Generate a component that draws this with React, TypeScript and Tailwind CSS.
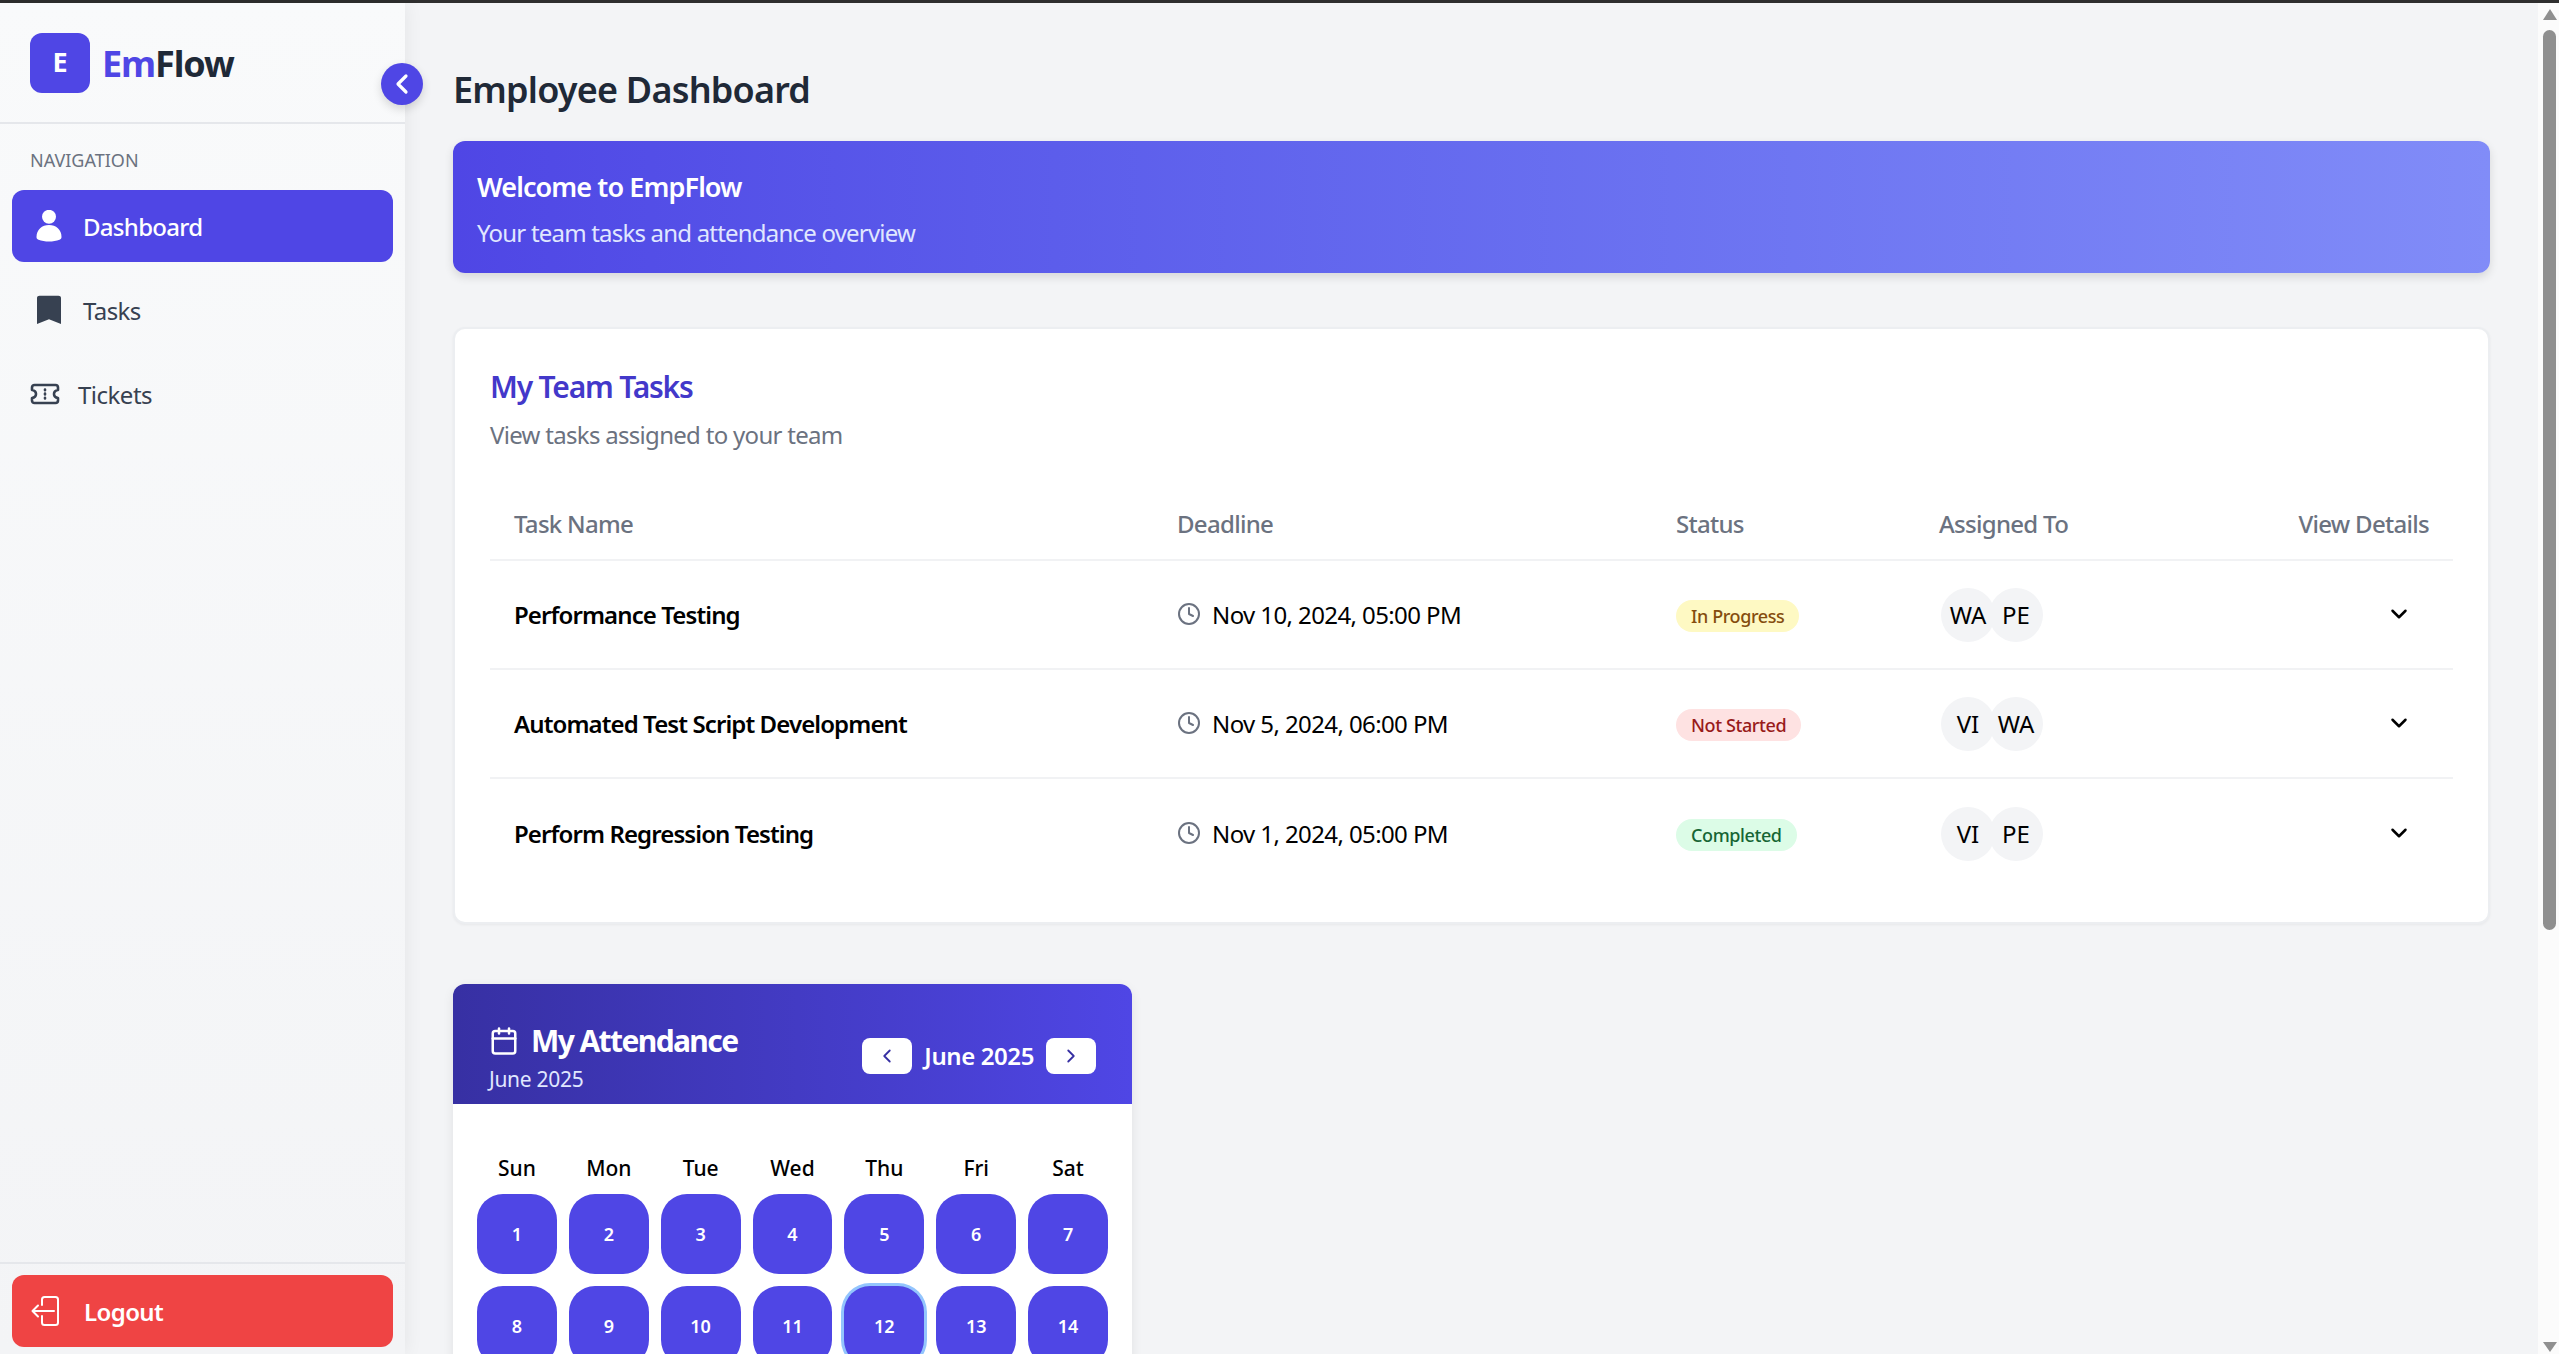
import React from 'react';
import { ChevronLeft, ChevronRight, ChevronDown, Calendar, Clock } from 'lucide-react';

const tasks = [
  { name: 'Performance Testing', deadline: 'Nov 10, 2024, 05:00 PM', status: 'In Progress', badge: 'bg-[#fef9c3] text-[#854d0e]', people: ['WA', 'PE'] },
  { name: 'Automated Test Script Development', deadline: 'Nov 5, 2024, 06:00 PM', status: 'Not Started', badge: 'bg-[#fee2e2] text-[#991b1b]', people: ['VI', 'WA'] },
  { name: 'Perform Regression Testing', deadline: 'Nov 1, 2024, 05:00 PM', status: 'Completed', badge: 'bg-[#dcfce7] text-[#166534]', people: ['VI', 'PE'] },
];

const weekDays = ['Sun', 'Mon', 'Tue', 'Wed', 'Thu', 'Fri', 'Sat'];
const days = Array.from({ length: 14 }, (_, i) => i + 1);

function UserIcon() {
  return (
    <svg width="26" height="32" viewBox="0 0 26 32" fill="white" className="shrink-0">
      <circle cx="13" cy="6.800" r="7" />
      <path d="M0.500 27C0.500 19.500 6 15 13 15s12.500 4.500 12.500 12c0 1.300-.7 2.200-2 2.700-3 1.200-6.800 1.800-10.500 1.800s-7.500-.6-10.500-1.800C1.200 29.200.5 28.300.5 27z" />
    </svg>
  );
}

function BookmarkIcon() {
  return (
    <svg width="26" height="32" viewBox="0 0 26 32" fill="#374151" className="shrink-0">
      <path d="M1 4C1 2.500 2.200 1.700 3.500 1.700h19C23.800 1.700 25 2.500 25 4v26l-12-4.800L1 30z" />
    </svg>
  );
}

function TicketIcon() {
  return (
    <svg width="30" height="26" viewBox="0 0 30 26" fill="none" stroke="#374151" strokeWidth="2.600" strokeLinejoin="round" strokeLinecap="round" className="shrink-0">
      <path d="M4.500 4h21c1.500 0 2.500 1 2.500 2.500V9c-2.500.4-4 1.800-4 4s1.500 3.600 4 4v2.500c0 1.500-1 2.500-2.500 2.500h-21C3 22 2 21 2 19.500V17c2.500-.4 4-1.800 4-4S4.500 9.400 2 9V6.500C2 5 3 4 4.500 4z" />
      <path d="M15 8.500v.8M15 12.600v.8M15 16.700v.8" />
    </svg>
  );
}

function LogoutIcon() {
  return (
    <svg width="28" height="30" viewBox="0 0 28 30" fill="none" stroke="white" strokeWidth="2" strokeLinecap="round" strokeLinejoin="round" className="shrink-0">
      <path d="M11 9V3.500C11 2 12 1 13.500 1h11C26 1 27 2 27 3.500v23c0 1.500-1 2.500-2.500 2.500h-11C12 29 11 28 11 26.500V20" />
      <path d="M23 15H2M7 9.500 1.500 15 7 20.500" />
    </svg>
  );
}

function Scrollbar() {
  return (
    <div className="w-[21px] shrink-0 bg-[#fbfbfb] flex flex-col items-center pl-[2px] pt-[6px] pb-[2px]">
      <div className="w-0 h-0 border-x-[7px] border-x-transparent border-b-[11px] border-b-[#8f8f8f]" />
      <div className="w-[13px] h-[900px] mt-[10px] rounded-full bg-[#8f8f8f]" />
      <div className="flex-1" />
      <div className="w-0 h-0 border-x-[7px] border-x-transparent border-t-[10px] border-t-[#8f8f8f]" />
    </div>
  );
}

function Sidebar() {
  return (
    <aside className="relative w-[405px] shrink-0 flex flex-col bg-gradient-to-b from-[#f9fafb] to-[#f3f4f6] shadow-[0_0_18px_rgba(0,0,0,0.07)]">
      <div className="h-[121px] shrink-0 flex items-center gap-[12px] pl-[30px] border-b-2 border-[#e5e7eb]">
        <div className="w-[60px] h-[60px] rounded-[12px] bg-[#4f46e5] flex items-center justify-center text-white text-[27px] font-bold">E</div>
        <span className="mt-[3px] text-[36px] font-bold text-[#1f2937] tracking-[-1.100px]"><span className="text-[#4f46e5]">Em</span>Flow</span>
      </div>
      <button className="absolute left-[381px] top-[60px] z-10 w-[42px] h-[42px] rounded-full bg-[#4f46e5] flex items-center justify-center shadow-[0_4px_10px_rgba(0,0,0,0.15)]">
        <ChevronLeft className="w-[32px] h-[32px] text-white" strokeWidth={2.400} />
      </button>
      <div className="flex-1 flex flex-col px-[12px] pt-[23px]">
        <div className="pl-[18px] text-[18px] leading-[27px] text-[#6b7280] mb-[16px]">NAVIGATION</div>
        <div className="h-[72px] rounded-[12px] bg-[#4f46e5] flex items-center gap-[21px] pl-[24px] text-[24px] font-medium text-white tracking-[-0.7px]">
          <UserIcon />
          <span className="pt-[1px]">Dashboard</span>
        </div>
        <div className="h-[72px] mt-[12px] rounded-[12px] flex items-center gap-[21px] pl-[24px] text-[24px] text-[#374151] tracking-[-0.6px]">
          <BookmarkIcon />
          <span className="pt-[1px]">Tasks</span>
        </div>
        <div className="h-[72px] mt-[12px] rounded-[12px] flex items-center gap-[18px] pl-[18px] text-[24px] text-[#374151] tracking-[-0.5px]">
          <TicketIcon />
          <span className="pt-[1px]">Tickets</span>
        </div>
      </div>
      <div className="h-[92px] shrink-0 border-t-2 border-[#e5e7eb] px-[12px] pt-[11px]">
        <div className="h-[72px] rounded-[12px] bg-[#ef4444] flex items-center gap-[25px] pl-[19px] text-[24px] font-semibold text-white tracking-[-0.6px]">
          <LogoutIcon />
          <span className="pt-[1px]">Logout</span>
        </div>
      </div>
    </aside>
  );
}

function TaskCard() {
  return (
    <section className="mt-[54px] h-[597px] rounded-[12px] bg-white border-2 border-[#eceef1] shadow-[0_1px_3px_rgba(0,0,0,0.05)] px-[35px] pt-[40px]">
      <h2 className="text-[30px] leading-[36px] font-semibold text-[#4338ca] tracking-[-1.200px]">My Team Tasks</h2>
      <p className="mt-[12px] text-[24px] leading-[36px] text-[#6b7280] tracking-[-0.7px]">View tasks assigned to your team</p>
      <div className="mt-[36px]">
        <div className="h-[72px] grid grid-cols-[663px_499px_263px_300px_1fr] items-center border-b-2 border-[#f1f2f4] text-[24px] text-[#6b7280] font-medium tracking-[-0.7px]">
          <div className="pl-[24px]">Task Name</div>
          <div className="pl-[24px]">Deadline</div>
          <div className="pl-[24px]">Status</div>
          <div className="pl-[24px]">Assigned To</div>
          <div className="pr-[24px] text-right">View Details</div>
        </div>
        {tasks.map((t, i) => (
          <div key={t.name} className={`h-[109px] grid grid-cols-[663px_499px_263px_300px_1fr] items-center text-[24px] text-black ${i < tasks.length - 1 ? 'border-b-2 border-[#f1f2f4]' : ''}`}>
            <div className="pl-[24px] font-semibold tracking-[-0.9px]">{t.name}</div>
            <div className="pl-[24px] flex items-center gap-[11px]">
              <Clock className="w-[24px] h-[24px] text-[#6b7280] -mt-[2px]" strokeWidth={2} />
              <span className="tracking-[-0.6px]">{t.deadline}</span>
            </div>
            <div className="pl-[24px] -mt-[2px]">
              <span className={`inline-block rounded-full px-[15px] text-[18px] leading-[32px] font-medium tracking-[-0.4px] ${t.badge}`}>{t.status}</span>
            </div>
            <div className="pl-[26px] flex">
              {t.people.map((p, j) => (
                <div key={p} className={`w-[54px] h-[54px] rounded-full bg-[#f3f4f6] flex items-center justify-center ${j > 0 ? '-ml-[6px]' : ''}`}>{p}</div>
              ))}
            </div>
            <div className="flex justify-end pr-[41px] -mt-[1px]">
              <ChevronDown className="w-[26px] h-[26px] text-black" strokeWidth={2.300} />
            </div>
          </div>
        ))}
      </div>
    </section>
  );
}

function AttendanceCard() {
  return (
    <section className="mt-[60px] w-[679px] rounded-[12px] bg-white shadow-[0_4px_12px_rgba(0,0,0,0.08)]">
      <div className="h-[120px] rounded-t-[12px] bg-gradient-to-r from-[#3730a3] to-[#4f46e5] flex items-start justify-between px-[36px] pt-[38px]">
        <div className="text-white">
          <div className="flex items-center gap-[12px]">
            <Calendar className="w-[30px] h-[30px]" strokeWidth={2} />
            <span className="text-[30px] leading-[38px] font-bold tracking-[-1.600px]">My Attendance</span>
          </div>
          <div className="mt-[4px] text-[21px] leading-[30px] text-[#e0e7ff] tracking-[-0.3px]">June 2025</div>
        </div>
        <div className="mt-[16px] flex items-center gap-[12px]">
          <div className="w-[50px] h-[36px] rounded-[8px] bg-white flex items-center justify-center">
            <ChevronLeft className="w-[22px] h-[22px] text-[#3730a3]" />
          </div>
          <span className="text-[24px] font-semibold text-white tracking-[-0.4px]">June 2025</span>
          <div className="w-[50px] h-[36px] rounded-[8px] bg-white flex items-center justify-center">
            <ChevronRight className="w-[22px] h-[22px] text-[#3730a3]" />
          </div>
        </div>
      </div>
      <div className="px-[24px] pt-[48px] pb-[24px]">
        <div className="grid grid-cols-7 gap-x-[12px] mb-[10px]">
          {weekDays.map((d) => (
            <div key={d} className="text-center text-[21px] leading-[32px] font-medium text-black">{d}</div>
          ))}
        </div>
        <div className="grid grid-cols-7 gap-[12px]">
          {days.map((d) => (
            <div key={d} className={`h-[80px] rounded-[26px] bg-[#4f46e5] flex items-center justify-center text-[18px] font-semibold text-white ${d === 12 ? 'ring-[3px] ring-[#93c5fd]' : ''}`}>{d}</div>
          ))}
        </div>
      </div>
    </section>
  );
}

export default function App() {
  return (
    <div className="h-[1354px] overflow-hidden flex flex-col font-['Noto_Sans',sans-serif] bg-[#f3f4f6]">
      <div className="h-[3px] shrink-0 bg-[#2e2e2e]" />
      <div className="flex-1 min-h-0 flex">
        <Sidebar />
        <main className="flex-1 min-w-0 overflow-hidden px-[48px] pt-[63px]">
          <h1 className="text-[36px] leading-[48px] font-semibold text-[#1f2937] tracking-[-0.8px]">Employee Dashboard</h1>
          <div className="mt-[27px] h-[132px] rounded-[12px] bg-gradient-to-r from-[#4f46e5] to-[#818cf8] shadow-[0_4px_10px_rgba(0,0,0,0.12)] px-[24px] pt-[4px] flex flex-col justify-center text-white">
            <div className="text-[27px] leading-[40px] font-semibold tracking-[-0.9px]">Welcome to EmpFlow</div>
            <div className="mt-[8px] text-[24px] leading-[36px] text-[#e0e7ff] tracking-[-0.8px]">Your team tasks and attendance overview</div>
          </div>
          <TaskCard />
          <AttendanceCard />
        </main>
        <Scrollbar />
      </div>
    </div>
  );
}
